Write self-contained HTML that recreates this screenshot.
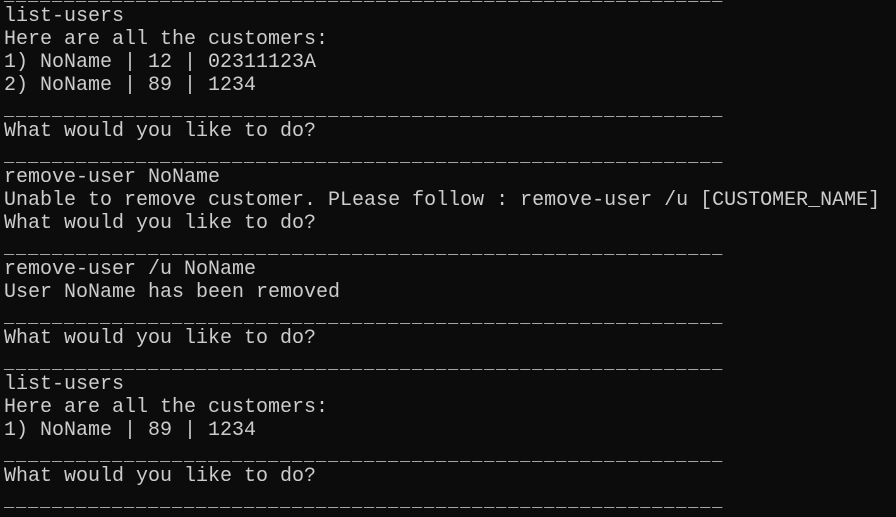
<!DOCTYPE html>
<html><head><meta charset="utf-8"><style>
html,body{margin:0;padding:0;background:#0c0c0c;width:896px;height:515px;overflow:hidden}
#t{position:absolute;left:4px;top:-18px;font-family:"Liberation Mono","DejaVu Sans Mono",monospace;font-size:20px;color:#cccccc}
#t div{height:23px;line-height:23px;overflow:visible;white-space:pre}
#t div.u{font-size:17px;letter-spacing:1.8px;line-height:29px}
</style></head><body><div id="t"><div class="u">____________________________________________________________</div><div>list-users</div><div>Here are all the customers:</div><div>1) NoName | 12 | 02311123A</div><div>2) NoName | 89 | 1234</div><div class="u">____________________________________________________________</div><div>What would you like to do?</div><div class="u">____________________________________________________________</div><div>remove-user NoName</div><div>Unable to remove customer. PLease follow : remove-user /u [CUSTOMER_NAME]</div><div>What would you like to do?</div><div class="u">____________________________________________________________</div><div>remove-user /u NoName</div><div>User NoName has been removed</div><div class="u">____________________________________________________________</div><div>What would you like to do?</div><div class="u">____________________________________________________________</div><div>list-users</div><div>Here are all the customers:</div><div>1) NoName | 89 | 1234</div><div class="u">____________________________________________________________</div><div>What would you like to do?</div><div class="u">____________________________________________________________</div></div></body></html>
